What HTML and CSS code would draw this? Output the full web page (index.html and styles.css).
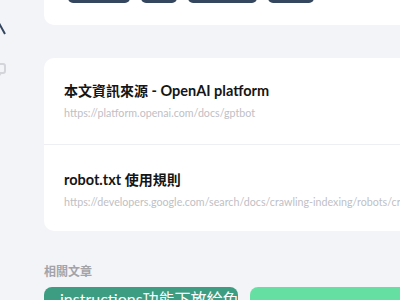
FILE: index.html
```html
<!DOCTYPE html>
<html lang="zh-Hant">
<head>
    <meta charset="UTF-8">
    <meta name="viewport" content="width=device-width, initial-scale=1.0">
    <title>GPTBot</title>
    <link rel="stylesheet" href="styles.css">
</head>
<body>
    <div class="page">
        <nav class="sidebar">
            <svg class="nav-icon" width="12" height="12" viewBox="0 0 12 12">
                <path d="M1 11 L6 2 L11 11" fill="none" stroke="#33455f" stroke-width="2"/>
            </svg>
            <svg class="nav-icon" width="12" height="14" viewBox="0 0 12 14">
                <rect x="1" y="1" width="10" height="9" rx="2" fill="none" stroke="#d3d5da" stroke-width="2"/>
                <path d="M4 10 L6 13 L8 10" fill="#d3d5da"/>
            </svg>
        </nav>

        <main class="main">
            <div class="card top-card">
                <div class="tags">
                    <span class="tag" style="width: 62px"></span>
                    <span class="tag" style="width: 36px"></span>
                    <span class="tag" style="width: 69px"></span>
                    <span class="tag" style="width: 46px"></span>
                </div>
            </div>

            <div class="card sources">
                <div class="source">
                    <div class="source-title"><span class="cjk">本文資訊來源</span> - OpenAI platform</div>
                    <div class="source-url">https://platform.openai.com/docs/gptbot</div>
                </div>
                <div class="source">
                    <div class="source-title">robot.txt <span class="cjk">使用規則</span></div>
                    <div class="source-url">https://developers.google.com/search/docs/crawling-indexing/robots/create-robots-txt</div>
                </div>
            </div>

            <h3 class="section-title">相關文章</h3>
            <div class="related">
                <div class="related-card dark-green">
                    <p>ChatGPT custom<br>instructions功能下放給免費用戶</p>
                </div>
                <div class="related-card light-green"></div>
            </div>
        </main>
    </div>
</body>
</html>
```

FILE: styles.css
```css
body {
    margin: 0;
    background-color: #f3f4f8;
    font-family: Lato, "Noto Sans CJK TC", sans-serif;
    overflow: hidden;
}
.page {
    display: flex;
    width: 520px;
}
.sidebar {
    width: 44px;
    flex-shrink: 0;
    display: flex;
    flex-direction: column;
    gap: 28px;
    padding-top: 23px;
}
.nav-icon {
    display: block;
    margin-left: -6px;
}
.main {
    flex: 1;
    margin-top: -40px;
}
.card {
    background: #fff;
    border-radius: 10px;
}
.top-card {
    height: 65px;
    padding: 19px 24px 0;
    box-sizing: border-box;
}
.tags {
    display: flex;
    gap: 11px;
}
.tag {
    display: block;
    height: 24px;
    background: #34475e;
    border-radius: 5px;
}
.sources {
    margin-top: 33px;
}
.source {
    height: 87px;
    padding: 24px 20px 0;
    box-sizing: border-box;
    border-bottom: 1px solid #eeeff2;
}
.source:last-child {
    border-bottom: none;
    height: 86px;
    padding-top: 26px;
}
.source-title {
    font-size: 14.5px;
    font-weight: bold;
    color: #151515;
    line-height: 18px;
}
.cjk {
    font-size: 14px;
}
.source-url {
    margin-top: 6px;
    font-size: 10.7px;
    color: #c0c0c5;
    white-space: nowrap;
    line-height: 14px;
}
.section-title {
    margin: 33px 0 0;
    font-size: 12px;
    font-weight: bold;
    color: #a3a3a8;
    line-height: 16px;
}
.related {
    display: flex;
    gap: 12px;
    margin-top: 7px;
}
.related-card {
    height: 60px;
    border-radius: 8px;
    flex-shrink: 0;
    overflow: hidden;
}
.related-card p {
    margin: -18px 0 0;
    padding: 0 16px;
    color: #fff;
    font-size: 16px;
    line-height: 20px;
    white-space: nowrap;
}
.dark-green {
    width: 194px;
    background: #3c9d82;
}
.light-green {
    width: 240px;
    background: #66e0a2;
}
```
